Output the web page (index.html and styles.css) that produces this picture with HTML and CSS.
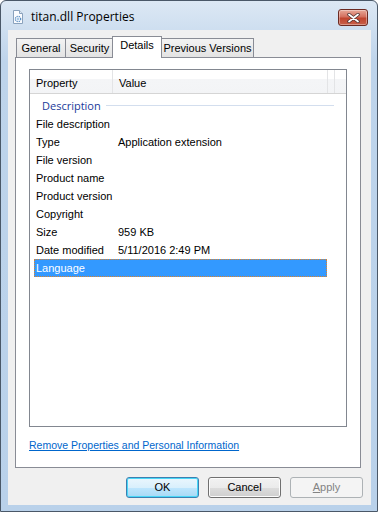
FILE: index.html
```html
<!DOCTYPE html>
<html lang="en">

<head>
    <meta charset="UTF-8">
    <title>titan.dll Properties</title>
    <link rel="stylesheet" href="styles.css">
</head>

<body>
    <div class="window">
        <div class="titlebar">
            <svg class="appicon" width="12" height="14" viewBox="0 0 12 14">
                <path d="M1.5 0.5h6l3 3v10h-9z" fill="#fafcff" stroke="#8aa2bd" />
                <path d="M7.5 0.5v3h3" fill="#dfe8f2" stroke="#8aa2bd" />
                <circle cx="6" cy="9" r="2.6" fill="none" stroke="#5a8fc2" stroke-width="1.4" stroke-dasharray="1.2 0.9" />
                <circle cx="6" cy="9" r="0.9" fill="#7fb0dc" />
            </svg>
            <span class="title">titan.dll Properties</span>
            <div class="closebtn">
                <svg width="13" height="10" viewBox="0 0 13 10">
                    <path d="M2 1.5l9 7M11 1.5l-9 7" stroke="#4a3030" stroke-width="3.4" stroke-linecap="round" />
                    <path d="M2 1.5l9 7M11 1.5l-9 7" stroke="#fff" stroke-width="1.8" stroke-linecap="round" />
                </svg>
            </div>
        </div>
        <div class="client">
            <div class="tabs">
                <div class="tab">General</div>
                <div class="tab">Security</div>
                <div class="tab selected">Details</div>
                <div class="tab">Previous Versions</div>
            </div>
            <div class="panel">
                <div class="listbox">
                    <div class="header">
                        <div class="col1">Property</div>
                        <div class="col2">Value</div>
                        <div class="col3"></div>
                    </div>
                    <div class="group">
                        <span>Description</span>
                        <div class="groupline"></div>
                    </div>
                    <div class="row"><div class="c1">File description</div><div class="c2"></div></div>
                    <div class="row"><div class="c1">Type</div><div class="c2">Application extension</div></div>
                    <div class="row"><div class="c1">File version</div><div class="c2"></div></div>
                    <div class="row"><div class="c1">Product name</div><div class="c2"></div></div>
                    <div class="row"><div class="c1">Product version</div><div class="c2"></div></div>
                    <div class="row"><div class="c1">Copyright</div><div class="c2"></div></div>
                    <div class="row"><div class="c1">Size</div><div class="c2">959 KB</div></div>
                    <div class="row"><div class="c1">Date modified</div><div class="c2">5/11/2016 2:49 PM</div></div>
                    <div class="row active"><div class="c1">Language</div><div class="c2"></div></div>
                </div>
                <a class="link" href="#">Remove Properties and Personal Information</a>
            </div>
            <div class="buttons">
                <div class="button default">OK</div>
                <div class="button">Cancel</div>
                <div class="button disabled"><u>A</u>pply</div>
            </div>
        </div>
    </div>
</body>

</html>
```

FILE: styles.css
```css
* {
    box-sizing: border-box;
}

body {
    margin: 0;
    font-family: "Liberation Sans", Arial, sans-serif;
    font-size: 11px;
    color: #000;
    background-color: #fff;
}

.window {
    width: 378px;
    height: 512px;
    border: 1px solid #4a5868;
    border-radius: 6px 6px 0 0;
    background: linear-gradient(#dce8f4, #bed4eb 60px, #b9d1ea);
    padding: 0 6px 6px 7px;
}

.titlebar {
    height: 29px;
    display: flex;
    align-items: center;
    position: relative;
}

.appicon {
    margin-left: 4px;
    margin-top: 2px;
}

.title {
    font-family: "Open Sans", "Noto Sans", sans-serif;
    font-size: 12px;
    margin-left: 7px;
    margin-top: 2px;
    color: #000;
}

.closebtn {
    position: absolute;
    right: 3px;
    top: 8px;
    width: 30px;
    height: 17px;
    border: 1px solid #6b2a22;
    border-radius: 3px;
    background: linear-gradient(#e8a898, #d4705e 45%, #c0452f 55%, #c8604a);
    display: flex;
    align-items: center;
    justify-content: center;
    box-shadow: inset 0 0 0 1px rgba(255, 255, 255, 0.35);
}

.client {
    height: 475px;
    background-color: #f0f0f0;
    padding: 6px 0 0 7px;
}

.tabs {
    display: flex;
    align-items: flex-end;
    height: 21px;
    padding-left: 1px;
    position: relative;
    z-index: 1;
}

.tab {
    height: 19px;
    border: 1px solid #898c95;
    border-bottom: none;
    background: linear-gradient(#f3f3f3, #e3e3e3);
    padding: 3px 0 0 0;
    margin-right: -1px;
    text-align: center;
    white-space: nowrap;
}

.tab.selected {
    height: 22px;
    background: #fff;
    padding-top: 2px;
    margin: 0 -2px -1px -1px;
    z-index: 2;
}

.tab:nth-child(1) { width: 50px; }
.tab:nth-child(2) { width: 49px; }
.tab:nth-child(3) { width: 50px; }
.tab:nth-child(4) { width: 93px; margin-left: 1px; }

.panel {
    width: 346px;
    height: 411px;
    border: 1px solid #898c95;
    background-color: #fff;
    padding: 11px 13px 0 13px;
}

.listbox {
    height: 358px;
    border: 1px solid #828790;
    background-color: #fff;
}

.header {
    display: flex;
    height: 24px;
    background: linear-gradient(#fff, #fff 40%, #f4f5f7 41%, #f3f4f6);
    border-bottom: 1px solid #d5d5d5;
}

.header > div {
    padding: 7px 0 0 6px;
    border-right: 1px solid #e3e4e6;
}

.col1 { width: 83px; }
.col2 { width: 215px; }
.col3 { width: 0; }

.group {
    display: flex;
    align-items: center;
    height: 21px;
    padding-left: 12px;
    padding-top: 1px;
    color: #1a3a9a;
    font-family: "Open Sans", "Noto Sans", sans-serif;
    font-size: 11px;
}

.groupline {
    width: 228px;
    height: 1px;
    margin-left: 5px;
    background-color: #d3deee;
}

.row {
    display: flex;
    height: 18px;
    width: 293px;
    margin-left: 4px;
    align-items: center;
}

.c1 {
    width: 82px;
    padding-left: 2px;
}

.c2 {
    padding-left: 2px;
}

.row.active {
    background-color: #3399ff;
    color: #fff;
    outline: 1px dotted #e0832a;
    outline-offset: -1px;
}

.link {
    display: block;
    margin-top: 12px;
    color: #0066cc;
    text-decoration: underline;
    font-size: 10.5px;
}

.buttons {
    display: flex;
    justify-content: flex-end;
    gap: 9px;
    padding-top: 9px;
    padding-right: 8px;
}

.button {
    width: 73px;
    height: 21px;
    border: 1px solid #707070;
    border-radius: 3px;
    background: linear-gradient(#f2f2f2, #ebebeb 50%, #dddddd 51%, #cfcfcf);
    text-align: center;
    line-height: 19px;
    box-shadow: inset 0 0 0 1px #fcfcfc;
}

.button.default {
    border-color: #3c7fb1;
    background: linear-gradient(#eaf6fd, #d9f0fc 50%, #bee6fd 51%, #a7d9f5);
    box-shadow: inset 0 0 0 1px #48d7f7;
}

.button.disabled {
    border-color: #adb2b5;
    background: #f4f4f4;
    color: #838383;
    box-shadow: none;
}
```
